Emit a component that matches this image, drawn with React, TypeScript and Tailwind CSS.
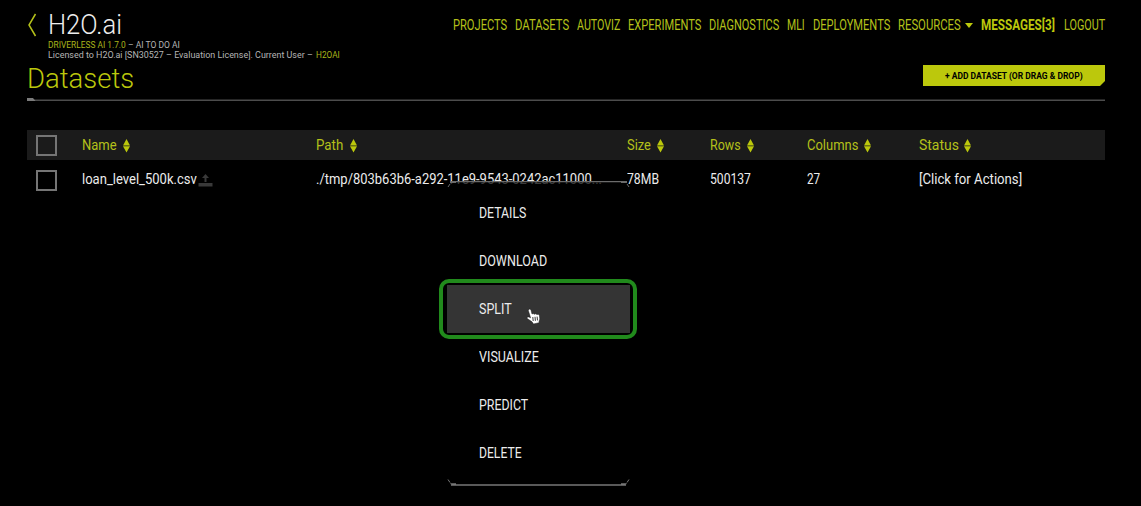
import { useLayoutEffect, useRef, useState } from "react";

type FitProps = { children: string; width: number; className?: string };

// Condenses a run of text horizontally so that it fills the given width.
function Fit({ children, width, className = "" }: FitProps) {
  const ref = useRef<HTMLSpanElement>(null);
  const [scale, setScale] = useState(1);
  useLayoutEffect(() => {
    if (ref.current) setScale(width / ref.current.offsetWidth);
  }, [width, children]);
  return (
    <span className={"inline-block shrink-0 whitespace-pre " + className} style={{ width }}>
      <span ref={ref} className="inline-block origin-left" style={{ transform: `scaleX(${scale})` }}>
        {children}
      </span>
    </span>
  );
}

function SortIcon() {
  return (
    <svg className="ml-[6px] h-[14px] w-[7px] shrink-0" viewBox="0 0 7 14" fill="#bcc80c">
      <path d="M3.500 0 7 6.500H0z M3.500 13.500 7 7.300H0z" />
    </svg>
  );
}

function Box() {
  return <span className="block size-[21px] border-2 border-[#757575]" />;
}

const nav = [
  { label: "PROJECTS", w: 54, gap: "mr-[8px]" },
  { label: "DATASETS", w: 54, gap: "mr-[8px]" },
  { label: "AUTOVIZ", w: 43.5, gap: "mr-[7.5px]" },
  { label: "EXPERIMENTS", w: 73, gap: "mr-[8px]" },
  { label: "DIAGNOSTICS", w: 70, gap: "mr-[8px]" },
  { label: "MLI", w: 18, gap: "mr-[8px]" },
  { label: "DEPLOYMENTS", w: 77, gap: "mr-[8px]" },
  { label: "RESOURCES", w: 63, gap: "mr-[4px]" },
];

const columns = [
  { label: "Name", w: 35 },
  { label: "Path", w: 27.5 },
  { label: "Size", w: 24 },
  { label: "Rows", w: 31 },
  { label: "Columns", w: 51 },
  { label: "Status", w: 39.5 },
];

const grid = "grid grid-cols-[55px_234px_310.5px_83.5px_96.5px_112px_1fr] items-center";

const menu = [
  { label: "DETAILS", w: 47.5 },
  { label: "DOWNLOAD", w: 68 },
  { label: "SPLIT", w: 33 },
  { label: "VISUALIZE", w: 60 },
  { label: "PREDICT", w: 49.5 },
  { label: "DELETE", w: 42.5 },
];

export default function App() {
  return (
    <div className="relative h-[506px] w-[1141px] overflow-hidden bg-black pr-[36px] pl-[27px] font-['Roboto','Liberation_Sans',sans-serif] text-white">
      <header className="flex h-[61px] justify-between">
        <div className="flex">
          <svg className="mt-[13px] h-[24px] w-[21px]" viewBox="0 0 21 24" fill="none" stroke="#b4c01a" strokeWidth="1.5">
            <path d="M8.5 1 2 12l6.500 11" />
          </svg>
          <div className="flex flex-col">
            <Fit width={74} className="mt-[9px] h-[31px] text-[28px] leading-[32px] font-light text-[#ededed]">H2O.ai</Fit>
            <div className="flex h-[10px] text-[9.500px] leading-[10px]">
              <Fit width={77.5} className="text-[#a9b41a]">DRIVERLESS AI 1.7.0</Fit>
              <Fit width={52} className="ml-[2px] text-[#b5b5b5]">– AI TO DO AI</Fit>
            </div>
            <div className="flex h-[10px] text-[9.500px] leading-[10px]">
              <Fit width={265} className="text-[#b5b5b5]">Licensed to H2O.ai [SN30527 – Evaluation License]. Current User –</Fit>
              <Fit width={23.5} className="ml-[3px] text-[#a9b41a]">H2OAI</Fit>
            </div>
          </div>
        </div>
        <nav className="mt-[15px] flex h-[20px] items-center text-[14px] leading-[20px] text-[#b4c01a]">
          {nav.map((n) => (
            <Fit key={n.label} width={n.w} className={n.gap}>{n.label}</Fit>
          ))}
          <svg className="mr-[8px] h-[5px] w-[8px]" viewBox="0 0 8 5" fill="#bcc80c"><path d="M0 0h8L4 5z" /></svg>
          <Fit width={73.5} className="mr-[10px] font-bold text-[#bcc80c]">MESSAGES[3]</Fit>
          <Fit width={41}>LOGOUT</Fit>
        </nav>
      </header>

      <div className="flex h-[37px] justify-between">
        <h1 className="pt-[2px]">
          <Fit width={107} className="h-[32px] text-[28px] leading-[32px] font-light text-[#bcc80c]">Datasets</Fit>
        </h1>
        <button className="mt-[4px] flex h-[21px] w-[182.500px] items-center justify-center bg-[#bcc80c] text-[9.500px] leading-[20px] font-bold text-black [clip-path:polygon(0_0,100%_0,100%_calc(100%-5px),calc(100%-5px)_100%,0_100%)]">
          <Fit width={137.5}>+ ADD DATASET (OR DRAG &amp; DROP)</Fit>
        </button>
      </div>
      <svg className="block h-[3px] w-[1078px]" viewBox="0 0 1078 3">
        <path d="M0 1.500h1078V3H0z" fill="#4c4c4c" />
        <path d="M0 0h6l2.500 3H0z" fill="#7b7b7b" />
      </svg>

      <main className="mt-[29px] text-[14.500px] leading-[20px]">
        <div className={grid + " h-[30px] bg-[#1b1b1b] text-[#b4c01a]"}>
          <span className="pl-[9px]"><Box /></span>
          {columns.map((c) => (
            <span key={c.label} className="flex items-center pt-px">
              <Fit width={c.w}>{c.label}</Fit>
              <SortIcon />
            </span>
          ))}
        </div>
        <div className={grid + " h-[39px] text-[#ececec]"}>
          <span className="pt-px pl-[9px]"><Box /></span>
          <span className="flex items-center">
            <Fit width={115}>loan_level_500k.csv</Fit>
            <svg className="ml-px h-[14px] w-[15px]" viewBox="0 0 15 14" fill="#393939">
              <path d="M7.500 1 11 5H8.500v4h-2V5H4z M0.500 10h14v3.500H0.500z" />
            </svg>
          </span>
          <Fit width={286}>./tmp/803b63b6-a292-11e9-9543-0242ac11000...</Fit>
          <Fit width={32}>78MB</Fit>
          <Fit width={41}>500137</Fit>
          <Fit width={13}>27</Fit>
          <Fit width={103.5}>[Click for Actions]</Fit>
        </div>
      </main>

      <div className="absolute top-[181px] left-[447px] w-[183px] text-[14px] leading-[20px] text-[#ececec]">
        <svg className="block h-[8px] w-[183px]" viewBox="0 0 183 8">
          <path d="M3 1H180L183 8H0z" fill="#000" fillOpacity=".75" />
          <path d="M4 0h175v1.300H4z M3 0h6v2H3z M174 0h6v2h-6z" fill="#6b6b6b" />
          <path d="M3 3 1 6M180 3l2 3" stroke="#6b6b6b" />
        </svg>
        <ul className="bg-black">
          {menu.map((m) => (
            <li key={m.label} className={"flex h-[48px] items-center pl-[32px] " + (m.label === "SPLIT" ? "bg-[#343434]" : "")}>
              <Fit width={m.w}>{m.label}</Fit>
            </li>
          ))}
        </ul>
        <svg className="block h-[10px] w-[183px]" viewBox="0 0 183 10">
          <path d="M4 7.300h175v1.500H4z M3 6.300h6v2.500H5z M174 6.300h6l-2 2.500h-4z" fill="#777" />
          <path d="M1 2.500l2 3M182 2.500l-2 3" stroke="#777" />
        </svg>
      </div>
      <div className="absolute top-[279px] left-[439px] h-[60px] w-[198px] rounded-[10px] border-4 border-[#218a1c]" />
      <svg className="absolute top-[308px] left-[526px] h-[17px] w-[15px]" viewBox="0 0 15 17" fill="#fff">
        <path d="M3.300 1c1 0 1.500.6 1.800 1.500L6 6l1.200-.5 1.200.8 1.300-.5 1.200.8 1.500-.3 1 1.200.4 3.500-.7 2.200v1.500L7.500 16l-1.500-2.200L1.200 10.500c-.5-1.300.7-1.900 1.700-1.400l1.700.7L2.300 2.500z" stroke="#1c1c1c" strokeWidth=".5" />
        <path d="m6.800 9 .4 4M9 8.800l.4 4M11.100 8.600l.4 3.800" stroke="#222" strokeWidth=".9" />
      </svg>
    </div>
  );
}
